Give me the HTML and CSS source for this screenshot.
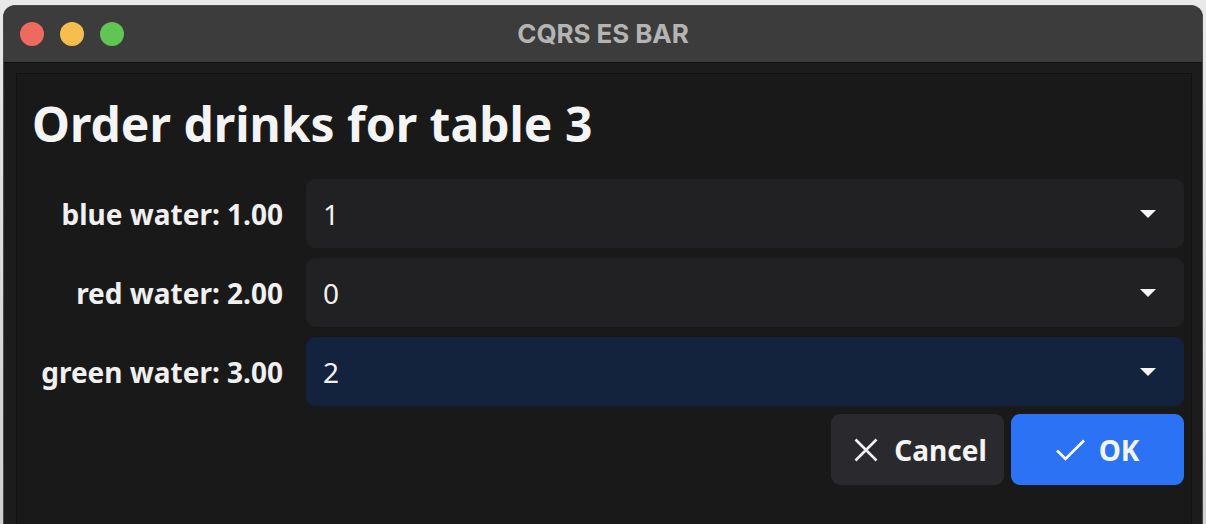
FILE: index.html
```html
<!DOCTYPE html>
<html lang="en">
<head>
<meta charset="utf-8">
<title>CQRS ES BAR</title>
<link rel="stylesheet" href="styles.css">
</head>
<body>
<div class="window">
  <header class="titlebar">
    <div class="lights">
      <span class="light red"></span>
      <span class="light yellow"></span>
      <span class="light green"></span>
    </div>
    <div class="wintitle">CQRS ES BAR</div>
  </header>
  <main class="content">
    <section class="panel">
      <h1 class="heading">Order drinks for table 3</h1>
      <div class="form">
        <label class="label">blue water: 1.00</label>
        <div class="select"><span class="value">1</span><span class="caret"></span></div>
        <label class="label">red water: 2.00</label>
        <div class="select"><span class="value">0</span><span class="caret"></span></div>
        <label class="label">green water: 3.00</label>
        <div class="select focused"><span class="value">2</span><span class="caret"></span></div>
        <div class="actions">
          <button class="btn cancel">
            <svg class="icon" width="24" height="24" viewBox="0 0 24 24"><path d="M1.5 1.5 L22.5 22.5 M22.5 1.5 L1.5 22.5" stroke="#f2f2f2" stroke-width="2.6" fill="none" stroke-linecap="butt"/></svg>
            <span>Cancel</span>
          </button>
          <button class="btn ok">
            <svg class="icon" width="29" height="22" viewBox="0 0 29 22"><path d="M1 11.5 L9.5 20 L28 1.5" stroke="#ffffff" stroke-width="2.6" fill="none" stroke-linecap="butt" stroke-linejoin="miter"/></svg>
            <span>OK</span>
          </button>
        </div>
      </div>
    </section>
  </main>
</div>
</body>
</html>
```
FILE: styles.css
```css
* { box-sizing: border-box; }
html, body { height: 100%; }
body {
  margin: 0;
  background: linear-gradient(#e9e9e9, #cfcfcf);
  overflow: hidden;
  font-family: "Noto Sans", "Open Sans", sans-serif;
}
.window {
  margin: 5px 0 0 3px;
  width: 1200px;
  height: calc(100% - 5px);
  border: 1px solid #4a4a4a;
  border-bottom: none;
  border-radius: 12px 12px 0 0;
  overflow: hidden;
  display: flex;
  flex-direction: column;
  background: #1c1c1c;
}
.titlebar {
  position: relative;
  height: 57px;
  flex: none;
  background: #3c3c3c;
  border-bottom: 1px solid #101010;
  display: flex;
  align-items: center;
  justify-content: center;
}
.lights {
  position: absolute;
  left: 16px;
  top: 16px;
  display: flex;
  gap: 16px;
}
.light {
  width: 24px;
  height: 24px;
  border-radius: 50%;
}
.red { background: #ee6a5f; }
.yellow { background: #f5bf4f; }
.green { background: #61c554; }
.wintitle {
  font-family: Inter, "Liberation Sans", sans-serif;
  font-weight: 700;
  font-size: 26px;
  color: #b4b4b4;
  letter-spacing: -0.1px;
  margin-top: -1px;
}
.content {
  flex: 1;
  padding: 10px 10px 0 12px;
  display: flex;
  min-height: 0;
}
.panel {
  flex: 1;
  background: #191919;
  border: 1px solid #121212;
  border-bottom: none;
  padding: 26px 7px 0 15px;
  overflow: hidden;
}
.heading {
  margin: 0;
  font-size: 48px;
  line-height: 48px;
  font-weight: 700;
  color: #f4f4f4;
}
.form {
  margin-top: 31px;
  display: grid;
  grid-template-columns: 251px 1fr;
  grid-auto-rows: 69px;
  column-gap: 23px;
  row-gap: 10px;
}
.label {
  align-self: center;
  text-align: right;
  font-size: 28px;
  font-weight: 700;
  color: #f0f0f0;
  white-space: nowrap;
}
.select {
  display: flex;
  align-items: center;
  justify-content: space-between;
  background: #212123;
  border-radius: 9px;
  padding: 0 28px 0 17px;
}
.select.focused { background: #13223d; }
.value {
  font-size: 28px;
  color: #f2f2f2;
}
.caret {
  width: 0;
  height: 0;
  border-left: 8px solid transparent;
  border-right: 8px solid transparent;
  border-top: 8px solid #f5f5f5;
  margin-top: 1px;
}
.actions {
  grid-column: 1 / -1;
  display: flex;
  justify-content: flex-end;
  gap: 7px;
  margin-top: -2px;
  height: 71px;
}
.btn {
  width: 173px;
  height: 71px;
  border: none;
  border-radius: 9px;
  display: flex;
  align-items: center;
  justify-content: center;
  gap: 16px;
  font-family: "Noto Sans", "Open Sans", sans-serif;
  font-size: 28px;
  font-weight: 700;
  color: #f4f4f4;
  padding: 0;
}
.btn.cancel { background: #2a2a2e; padding-left: 6px; }
.btn.ok { background: #2b72f5; gap: 14px; }
.icon { flex: none; display: block; }
```
